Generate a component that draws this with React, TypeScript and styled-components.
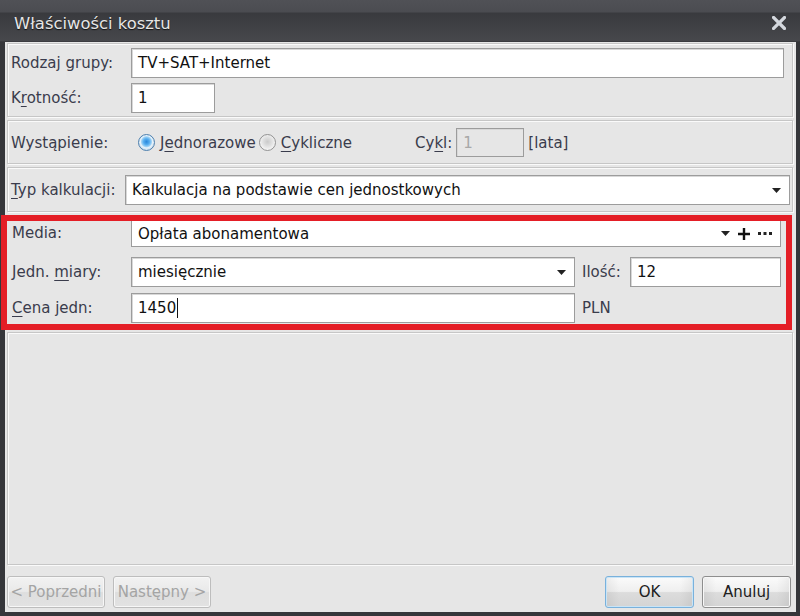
import React from 'react';
import styled, { createGlobalStyle } from 'styled-components';

const GlobalStyle = createGlobalStyle`
    html, body {
        margin: 0;
        padding: 0;
        background: #34353a;
    }
    body {
        font-family: 'DejaVu Sans', 'Liberation Sans', sans-serif;
    }
`;

const Window = styled.div`
    width: 800px;
    height: 616px;
    display: flex;
    flex-direction: column;
    background: #35363a;
    overflow: hidden;
`;

const TitleBar = styled.div`
    height: 42px;
    flex: none;
    display: flex;
    align-items: center;
    justify-content: space-between;
    padding: 4px 14px 0 14px;
    box-sizing: border-box;
    background: linear-gradient(#505156 0, #4b4c51 12px, #393a3e 13px, #47484c 41px, #2e2f33 42px);
`;

const Title = styled.span`
    font-size: 16.4px;
    color: #e6e6e6;
    text-shadow: 0 1px 1px #111;
`;

const Client = styled.div`
    flex: 1;
    margin: 0 4px 4px 5px;
    background: #e6e6e6;
    display: flex;
    flex-direction: column;
    padding-top: 1px;
`;

const Panel = styled.div<{ $h: number }>`
    height: ${(p) => p.$h}px;
    box-sizing: border-box;
    margin: 0 3px 3px 2px;
    border: 1px solid #c6c6c6;
    box-shadow: inset 1px 1px 0 #fafafa, 1px 1px 0 #fafafa;
    display: flex;
    flex-direction: column;
    justify-content: center;
    gap: 5px;
    padding: 1px 8px 0 3px;
`;

const FormRow = styled.div`
    display: flex;
    align-items: center;
    height: 30px;
`;

const Label = styled.span<{ $w?: number }>`
    font-size: 15px;
    color: #3a3c4c;
    white-space: nowrap;
    width: ${(p) => (p.$w ? `${p.$w}px` : 'auto')};
    flex: none;
`;

const U = styled.u`
    text-decoration-thickness: 1px;
    text-underline-offset: 3px;
`;

const Field = styled.div<{ $w?: number; $h?: number; $disabled?: boolean }>`
    height: ${(p) => p.$h ?? 30}px;
    width: ${(p) => (p.$w ? `${p.$w}px` : 'auto')};
    flex: ${(p) => (p.$w ? 'none' : '1')};
    box-sizing: border-box;
    border: 1px solid #9c9c9c;
    box-shadow: inset 1px 1px 0 #d8d8d8;
    background: ${(p) => (p.$disabled ? '#e6e6e6' : '#ffffff')};
    color: ${(p) => (p.$disabled ? '#a8a8a8' : '#111111')};
    font-size: 15px;
    display: flex;
    align-items: center;
    padding: 0 8px 0 6px;
    gap: 8px;
`;

const FieldText = styled.span`
    flex: 1;
    white-space: nowrap;
`;

const Caret = styled.span`
    display: inline-block;
    width: 1px;
    height: 20px;
    background: #111;
    vertical-align: middle;
    margin-left: 1px;
`;

const RadioGroup = styled.div`
    display: flex;
    align-items: center;
    margin-left: 19px;
`;

const RadioDot = styled.span<{ $on?: boolean }>`
    width: 17px;
    height: 17px;
    border-radius: 50%;
    box-sizing: border-box;
    border: 1px solid ${(p) => (p.$on ? '#4c7fae' : '#929292')};
    background: ${(p) =>
        p.$on
            ? 'radial-gradient(circle at 50% 45%, #2a86da 0, #56aef0 3px, #9fd2f5 5px, #e6f2fb 6px, #d2e2ee 8px)'
            : 'radial-gradient(circle at 50% 45%, #cacaca 0, #dedede 4px, #f4f4f4 8px)'};
    margin-right: 5px;
    flex: none;
`;

const RadioLabel = styled.span`
    font-size: 15px;
    color: #3a3c4c;
    margin-right: 3px;
`;

const Highlight = styled.div`
    margin: 0 0 2px -4px;
    width: 791px;
    height: 115px;
    box-sizing: border-box;
    border: 6px solid #e41e26;
    display: grid;
    grid-template-columns: 119px 444px 55px 151px;
    grid-auto-rows: 30px;
    row-gap: 6px;
    align-items: center;
    padding: 0 0 0 5px;
    align-content: start;
    background: #e6e6e6;
`;

const MediaField = styled(Field)`
    grid-column: 2 / 5;
    height: 26px;
    align-self: start;
    margin-bottom: -4px;
    border-top: none;
    box-shadow: none;
`;

const Unit = styled.span<{ $span?: boolean }>`
    font-size: 15px;
    color: #3a3c4c;
    padding-left: 7px;
    grid-column: ${(p) => (p.$span ? '3 / 5' : 'auto')};
`;

const LowerPanel = styled.div`
    flex: 1;
    margin: 0 3px 0 2px;
    border: 1px solid #c6c6c6;
    box-shadow: inset 1px 1px 0 #fafafa, 1px 1px 0 #fafafa;
`;

const Footer = styled.div`
    height: 47px;
    flex: none;
    display: flex;
    align-items: flex-start;
    padding: 11px 5px 0 2px;
    box-sizing: border-box;
    gap: 8px;
`;

const Spacer = styled.div`
    flex: 1;
`;

const Button = styled.button<{ $disabled?: boolean; $default?: boolean }>`
    width: ${(p) => (p.$default !== undefined ? 89 : 98)}px;
    height: 32px;
    border-radius: 3px;
    border: 1px solid ${(p) => (p.$default ? '#79b1dc' : p.$disabled ? '#bdbdbd' : '#8e8e8e')};
    box-shadow: inset 0 0 0 1px ${(p) => (p.$default ? '#c9e4f6' : '#f7f7f7')};
    background: ${(p) =>
        p.$disabled
            ? 'linear-gradient(#f2f2f2, #e9e9e9 48%, #dedede 52%, #e2e2e2)'
            : 'linear-gradient(90deg, rgba(0,0,0,0.06), rgba(0,0,0,0) 15%, rgba(0,0,0,0) 85%, rgba(0,0,0,0.06)), linear-gradient(#fbfbfb, #efefef 48%, #dcdcdc 52%, #d4d4d4)'};
    font-family: 'DejaVu Sans', 'Liberation Sans', sans-serif;
    font-size: 15px;
    color: ${(p) => (p.$disabled ? '#a4a4a4' : '#202020')};
    padding: 0;
`;

const ArrowIcon = () => (
    <svg width="9" height="5" viewBox="0 0 9 5">
        <path d="M0 0 H9 L4.5 5 Z" fill="#222" />
    </svg>
);

const PlusIcon = () => (
    <svg width="12" height="12" viewBox="0 0 12 12">
        <path d="M4.8 0 H7.2 V4.8 H12 V7.2 H7.2 V12 H4.8 V7.2 H0 V4.8 H4.8 Z" fill="#111" />
    </svg>
);

const DotsIcon = () => (
    <svg width="14" height="3" viewBox="0 0 14 3">
        <rect x="0" y="0" width="3" height="3" fill="#222" />
        <rect x="5.5" y="0" width="3" height="3" fill="#222" />
        <rect x="11" y="0" width="3" height="3" fill="#222" />
    </svg>
);

const CloseIcon = () => (
    <svg width="14" height="14" viewBox="0 0 14 14">
        <path d="M1.5 1.5 L12.5 12.5 M12.5 1.5 L1.5 12.5" stroke="#d4d8de" strokeWidth="3.2" strokeLinecap="square" />
    </svg>
);

const App = () => {
    return (
        <>
            <GlobalStyle />
            <Window>
                <TitleBar>
                    <Title>Właściwości kosztu</Title>
                    <CloseIcon />
                </TitleBar>
                <Client>
                    <Panel $h={74}>
                        <FormRow>
                            <Label $w={120}>Rodzaj grupy:</Label>
                            <Field>
                                <FieldText>TV+SAT+Internet</FieldText>
                            </Field>
                        </FormRow>
                        <FormRow>
                            <Label $w={120}>
                                K<U>r</U>otność:
                            </Label>
                            <Field $w={84}>
                                <FieldText>1</FieldText>
                            </Field>
                        </FormRow>
                    </Panel>
                    <Panel $h={44}>
                        <FormRow>
                            <Label $w={108}>Wystąpienie:</Label>
                            <RadioGroup>
                                <RadioDot $on />
                                <RadioLabel>
                                    J<U>e</U>dnorazowe
                                </RadioLabel>
                                <RadioDot />
                                <RadioLabel>
                                    <U>C</U>ykliczne
                                </RadioLabel>
                            </RadioGroup>
                            <Label style={{ marginLeft: 60, marginRight: 4 }}>
                                Cy<U>k</U>l:
                            </Label>
                            <Field $w={68} $h={29} $disabled>
                                <FieldText>1</FieldText>
                            </Field>
                            <Label style={{ marginLeft: 4 }}>[lata]</Label>
                        </FormRow>
                    </Panel>
                    <Panel $h={45}>
                        <FormRow>
                            <Label $w={114}>
                                <U>T</U>yp kalkulacji:
                            </Label>
                            <Field style={{ marginRight: -6 }}>
                                <FieldText>Kalkulacja na podstawie cen jednostkowych</FieldText>
                                <ArrowIcon />
                            </Field>
                        </FormRow>
                    </Panel>
                    <Highlight>
                        <Label style={{ alignSelf: 'start', paddingTop: 3 }}>Media:</Label>
                        <MediaField>
                            <FieldText>Opłata abonamentowa</FieldText>
                            <ArrowIcon />
                            <PlusIcon />
                            <DotsIcon />
                        </MediaField>
                        <Label>
                            Jedn. <U>m</U>iary:
                        </Label>
                        <Field>
                            <FieldText>miesięcznie</FieldText>
                            <ArrowIcon />
                        </Field>
                        <Unit>Ilość:</Unit>
                        <Field>
                            <FieldText>12</FieldText>
                        </Field>
                        <Label>
                            <U>C</U>ena jedn:
                        </Label>
                        <Field>
                            <FieldText>
                                1450
                                <Caret />
                            </FieldText>
                        </Field>
                        <Unit $span>PLN</Unit>
                    </Highlight>
                    <LowerPanel />
                    <Footer>
                        <Button $disabled>&lt; Poprzedni</Button>
                        <Button $disabled>Następny &gt;</Button>
                        <Spacer />
                        <Button $default>OK</Button>
                        <Button $default={false}>Anuluj</Button>
                    </Footer>
                </Client>
            </Window>
        </>
    );
};

export default App;
